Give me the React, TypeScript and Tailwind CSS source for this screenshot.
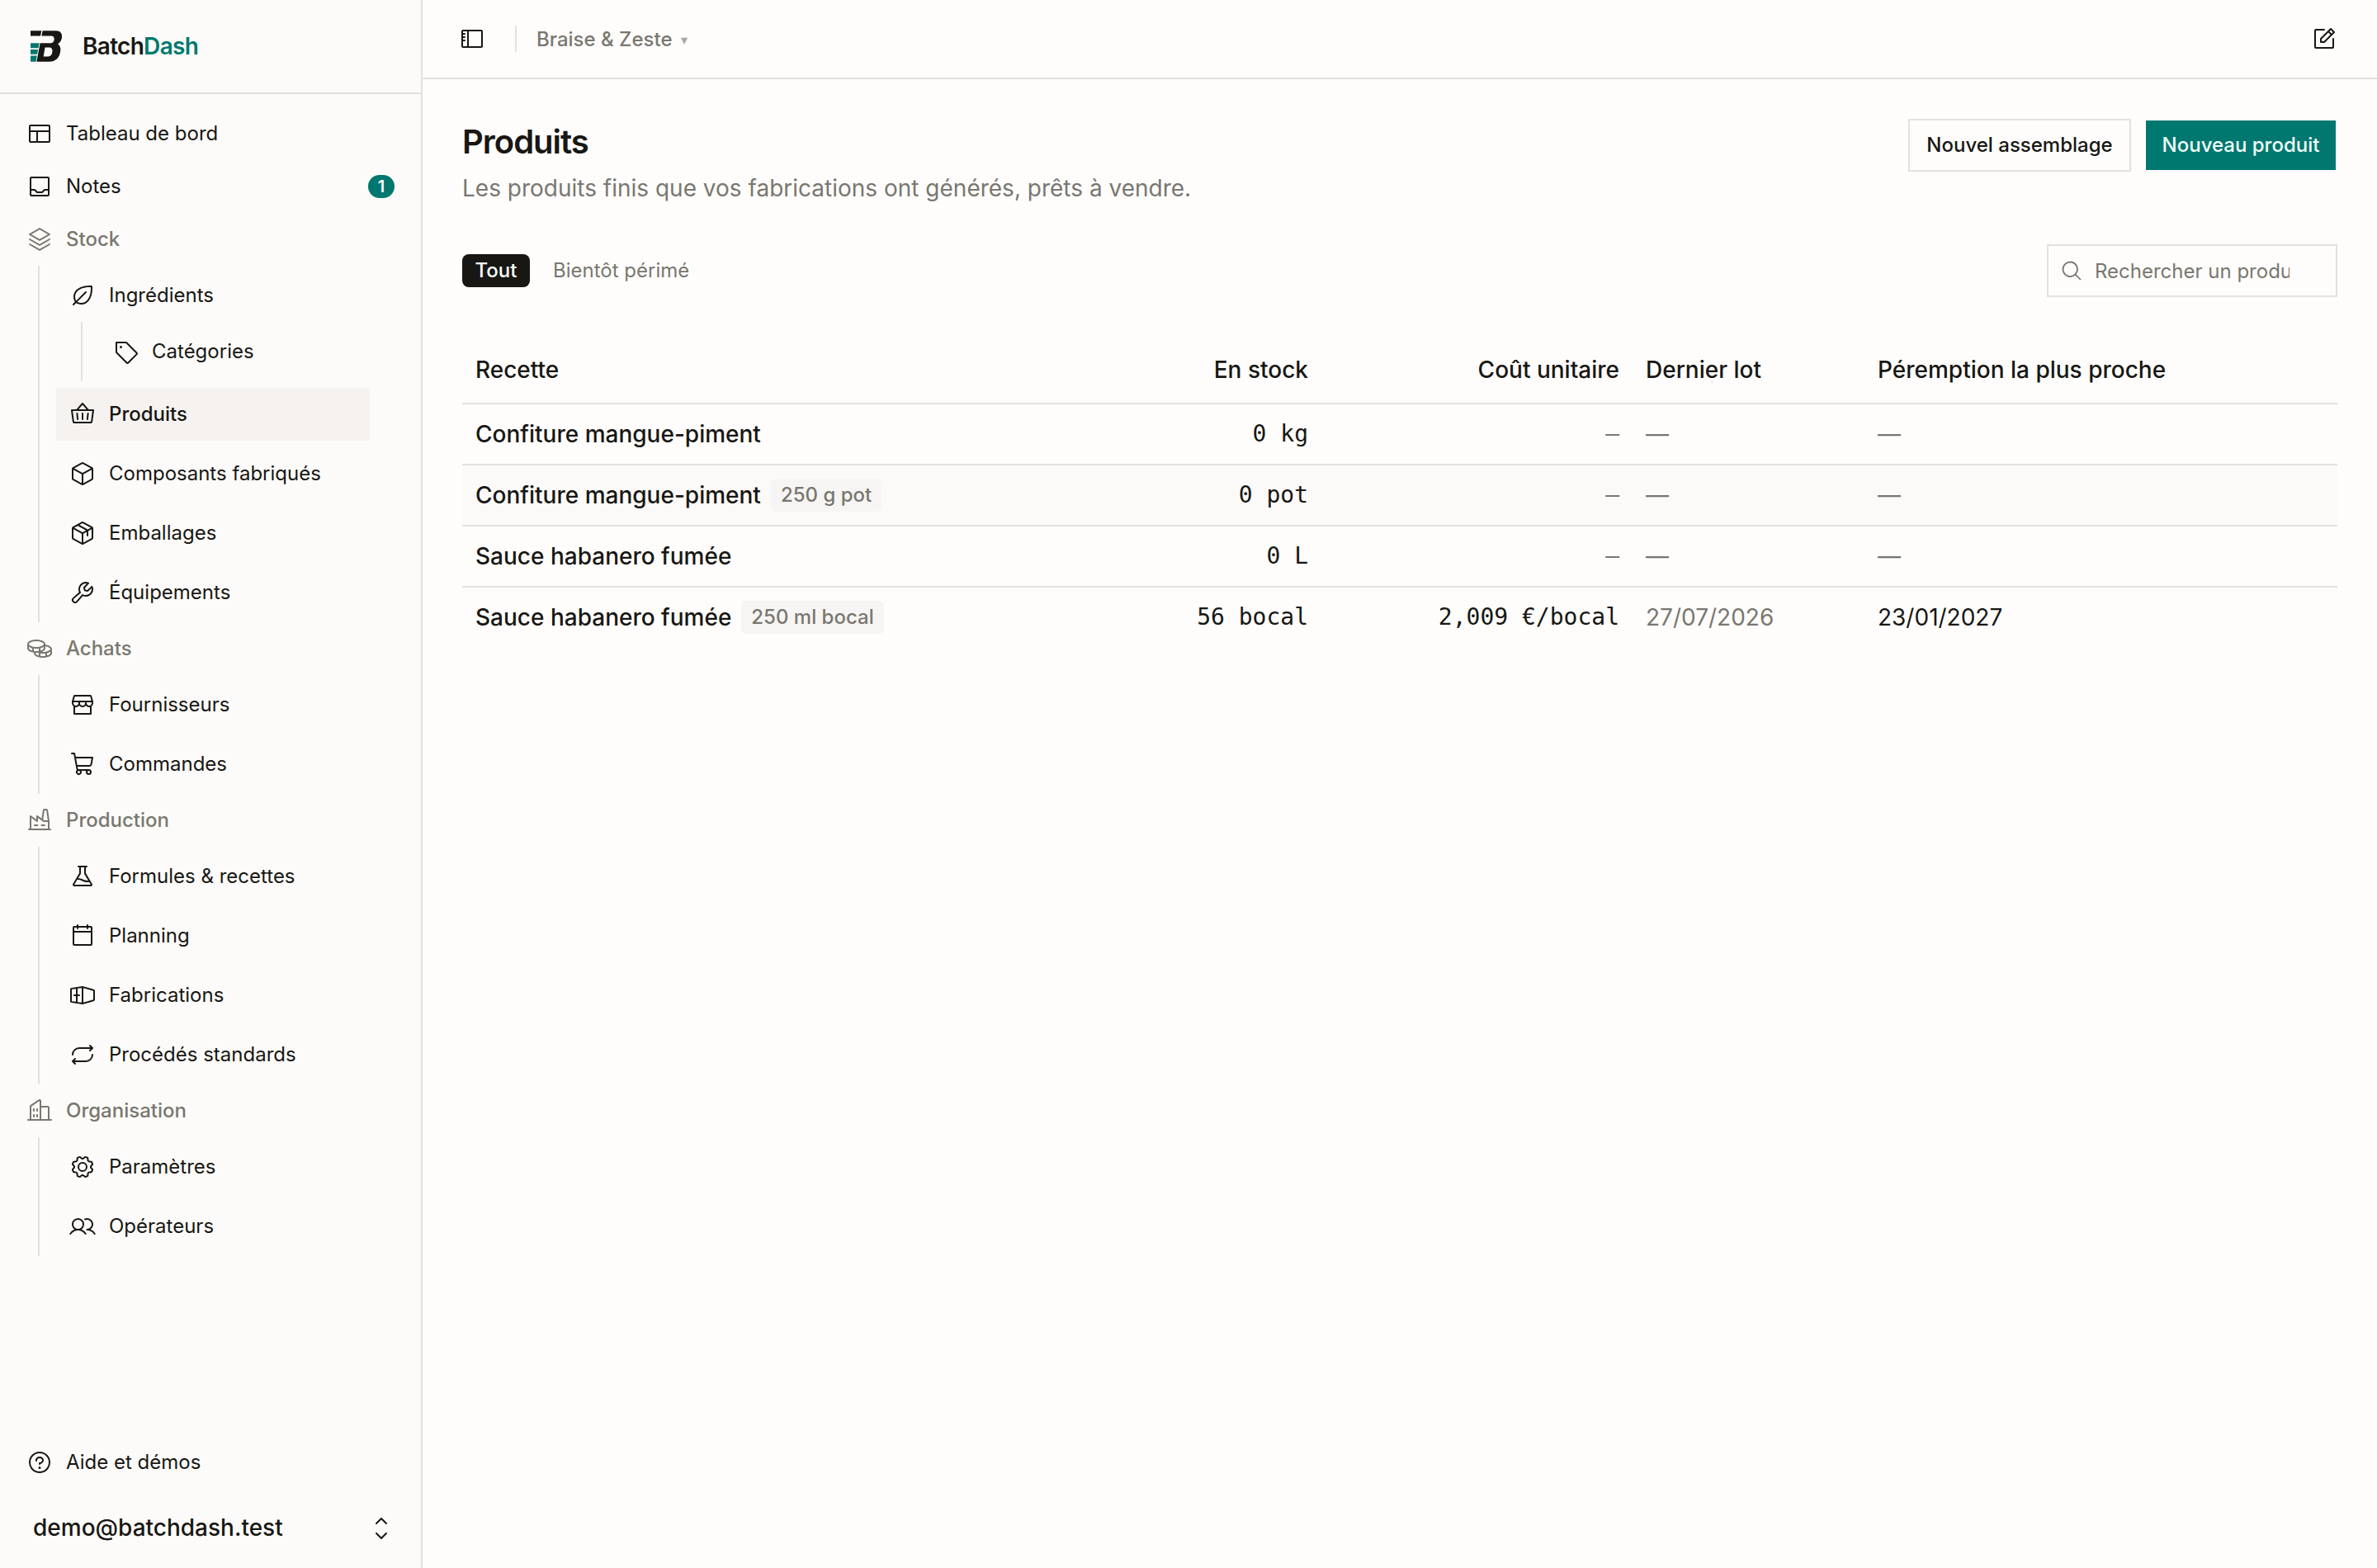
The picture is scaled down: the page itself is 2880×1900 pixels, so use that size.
import type { ComponentType, ReactNode } from 'react'
import {
  PiBasket,
  PiBuildings,
  PiCalendarBlank,
  PiCaretUpDown,
  PiCoins,
  PiCube,
  PiFactory,
  PiFlask,
  PiGear,
  PiLayout,
  PiLeaf,
  PiMagnifyingGlass,
  PiNotePencil,
  PiPackage,
  PiQuestion,
  PiRepeat,
  PiShippingContainer,
  PiShoppingCart,
  PiSidebar,
  PiStack,
  PiStorefront,
  PiTag,
  PiTray,
  PiUsers,
  PiWrench,
} from 'react-icons/pi'

type Icon = ComponentType<{ className?: string }>

type Item = {
  label: string
  icon: Icon
  active?: boolean
  children?: Item[]
}

const sections: { label: string; icon: Icon; items: Item[] }[] = [
  {
    label: 'Stock',
    icon: PiStack,
    items: [
      {
        label: 'Ingrédients',
        icon: PiLeaf,
        children: [{ label: 'Catégories', icon: PiTag }],
      },
      { label: 'Produits', icon: PiBasket, active: true },
      { label: 'Composants fabriqués', icon: PiCube },
      { label: 'Emballages', icon: PiPackage },
      { label: 'Équipements', icon: PiWrench },
    ],
  },
  {
    label: 'Achats',
    icon: PiCoins,
    items: [
      { label: 'Fournisseurs', icon: PiStorefront },
      { label: 'Commandes', icon: PiShoppingCart },
    ],
  },
  {
    label: 'Production',
    icon: PiFactory,
    items: [
      { label: 'Formules & recettes', icon: PiFlask },
      { label: 'Planning', icon: PiCalendarBlank },
      { label: 'Fabrications', icon: PiShippingContainer },
      { label: 'Procédés standards', icon: PiRepeat },
    ],
  },
  {
    label: 'Organisation',
    icon: PiBuildings,
    items: [
      { label: 'Paramètres', icon: PiGear },
      { label: 'Opérateurs', icon: PiUsers },
    ],
  },
]

const products = [
  { name: 'Confiture mangue-piment', stock: '0 kg' },
  { name: 'Confiture mangue-piment', format: '250 g pot', stock: '0 pot', striped: true },
  { name: 'Sauce habanero fumée', stock: '0 L' },
  {
    name: 'Sauce habanero fumée',
    format: '250 ml bocal',
    stock: '56 bocal',
    cost: '2,009 €/bocal',
    lastBatch: '27/07/2026',
    expiry: '23/01/2027',
  },
]

function Logo() {
  return (
    <svg viewBox="0 0 40 40" className="size-10 shrink-0">
      <g fill="#181713">
        <path d="M1 1.300h13.200l-1.200 6.200H1z" />
        <path
          fillRule="evenodd"
          d="M15.600 1.300H32c5 0 7.600 3.400 7 8-.5 4-2.400 6.600-5 8 2.600 1.600 3.800 4.600 3.200 8.600-1 8-6 12.800-13.600 12.800H8.400l4.200-22.400h12.800c2.400 0 4-1.600 4.300-4.200.3-2.800-1-4.600-3.600-4.600H14.400zM18.600 21.600l-2 10.800h5.600c3 0 4.800-1.800 5.200-5.400.4-3.400-.8-5.400-3.600-5.400z"
        />
      </g>
      <g fill="#00786f">
        <path d="M1 16.300h10.600l-1.100 6H1z" />
        <path d="M1 24h9.200l-1.100 5.800H1z" />
        <path d="M1 31.500h7.800l-1.300 7.200H1z" />
      </g>
    </svg>
  )
}

function NavItem({ label, icon: Icon, active, children }: Item) {
  return (
    <li>
      <a
        className={
          active
            ? 'flex h-16 items-center gap-4 bg-[#f5f2f0] px-4 font-medium'
            : 'flex h-16 items-center gap-4 px-4'
        }
      >
        <Icon className="size-8 shrink-0" />
        {label}
      </a>
      {children && (
        <ul className="ml-[30px] border-l-2 border-[#e2e1de] py-1 pl-5">
          {children.map((child) => (
            <NavItem key={child.label} {...child} />
          ))}
        </ul>
      )}
    </li>
  )
}

function Sidebar() {
  return (
    <aside className="flex w-[512px] shrink-0 flex-col border-r-2 border-[#e2e1de] bg-[#fcfbf9] text-2xl">
      <div className="flex h-[114px] items-center gap-6 border-b-2 border-[#e2e1de] px-9">
        <Logo />
        <span className="pt-0.5 text-[28px] font-semibold tracking-[-0.025em]">
          Batch<span className="text-[#00786f]">Dash</span>
        </span>
      </div>
      <nav className="flex-1 px-4 pt-4">
        <a className="flex h-16 items-center gap-4 px-4">
          <PiLayout className="size-8" />
          Tableau de bord
        </a>
        <a className="flex h-16 items-center gap-4 px-4">
          <PiTray className="size-8" />
          Notes
          <span className="ml-auto flex h-7 w-8 items-center justify-center rounded-full bg-[#00786f] text-xl font-semibold text-white">
            1
          </span>
        </a>
        {sections.map((section) => (
          <div key={section.label}>
            <div className="flex h-16 items-center gap-4 px-4 font-medium text-[#79776f]">
              <section.icon className="size-8" />
              {section.label}
            </div>
            <ul className="mr-[46px] ml-[30px] flex flex-col gap-2 border-l-2 border-[#e2e1de] py-1 pl-5">
              {section.items.map((item) => (
                <NavItem key={item.label} {...item} />
              ))}
            </ul>
          </div>
        ))}
      </nav>
      <div className="px-4">
        <a className="flex h-16 items-center gap-4 px-4">
          <PiQuestion className="size-8" />
          Aide et démos
        </a>
        <button className="flex h-24 w-full items-center justify-between pr-4 pl-6 text-[28px] font-medium">
          demo@batchdash.test
          <PiCaretUpDown className="size-8" />
        </button>
      </div>
    </aside>
  )
}

function Muted({ children }: { children: ReactNode }) {
  return <span className="text-[#79776f]">{children}</span>
}

function ProductTable() {
  return (
    <table className="mt-12 w-full table-fixed border-collapse text-[28px]">
      <colgroup>
        <col className="w-[680px]" />
        <col className="w-[361px]" />
        <col className="w-[377px]" />
        <col className="w-[281px]" />
        <col />
      </colgroup>
      <thead>
        <tr className="h-[81px] border-b-2 border-[#e2e1de] text-left [&>th]:px-4 [&>th]:font-medium">
          <th>Recette</th>
          <th className="text-right">En stock</th>
          <th className="text-right">Coût unitaire</th>
          <th>Dernier lot</th>
          <th>Péremption la plus proche</th>
        </tr>
      </thead>
      <tbody>
        {products.map((product, index) => (
          <tr
            key={index}
            className={
              product.striped
                ? 'h-[74px] border-b-2 border-[#e2e1de] bg-[#fbfaf9] [&>td]:px-4'
                : 'h-[74px] border-b-2 border-[#e2e1de] last:h-[72px] last:border-b-0 [&>td]:px-4'
            }
          >
            <td>
              <div className="flex items-center gap-3 font-medium">
                {product.name}
                {product.format && (
                  <span className="flex h-10 items-center rounded-md bg-[#f6f5f4] px-3 text-2xl text-[#79776f]">
                    {product.format}
                  </span>
                )}
              </div>
            </td>
            <td className="text-right font-['DejaVu_Sans_Mono',monospace]">{product.stock}</td>
            <td className="text-right font-['DejaVu_Sans_Mono',monospace]">
              {product.cost ?? <Muted>–</Muted>}
            </td>
            <td>
              <Muted>{product.lastBatch ?? '—'}</Muted>
            </td>
            <td>{product.expiry ?? <Muted>—</Muted>}</td>
          </tr>
        ))}
      </tbody>
    </table>
  )
}

export default function App() {
  return (
    <div className="flex h-[1900px] w-[2880px] bg-[#fefdfc] font-[Inter,sans-serif] text-[#181713]">
      <Sidebar />
      <div className="flex flex-1 flex-col">
        <header className="flex h-24 items-center border-b-2 border-[#e2e1de] pr-12 pl-11">
          <PiSidebar className="size-8" />
          <div className="ml-9 h-8 w-0.5 bg-[#e2e1de]" />
          <button className="ml-6 flex items-center gap-2 pt-0.5 text-2xl font-medium text-[#79776f]">
            Braise &amp; Zeste
            <span className="pl-0.5 text-base text-[#a8a6a0]">▾</span>
          </button>
          <PiNotePencil className="ml-auto size-8" />
        </header>
        <main className="flex flex-col px-12 pt-12">
          <div className="flex items-start justify-between">
            <div>
              <h1 className="text-[40px] leading-[56px] font-semibold tracking-[-0.025em]">
                Produits
              </h1>
              <p className="text-[28px] leading-[56px] text-[#79776f]">
                Les produits finis que vos fabrications ont générés, prêts à vendre.
              </p>
            </div>
            <div className="flex items-center gap-[18px] text-2xl font-medium">
              <button className="h-16 w-[270px] border-2 border-[#e2e1de]">Nouvel assemblage</button>
              <button className="mr-0.5 h-[60px] w-[230px] bg-[#00786f] text-[#f0fdfa]">
                Nouveau produit
              </button>
            </div>
          </div>
          <div className="mt-10 flex items-center justify-between text-2xl">
            <div className="flex items-center gap-3">
              <button className="h-10 w-[82px] rounded-lg bg-[#181713] font-medium text-white">
                Tout
              </button>
              <button className="px-4 text-[#79776f]">Bientôt périmé</button>
            </div>
            <div className="flex h-16 w-[352px] items-center gap-3.5 border-2 border-[#e2e1de] px-3.5 text-[#79776f]">
              <PiMagnifyingGlass className="size-7 shrink-0" />
              <div className="w-[236px] overflow-hidden pt-0.5 whitespace-nowrap">
                Rechercher un produit
              </div>
            </div>
          </div>
          <ProductTable />
        </main>
      </div>
    </div>
  )
}
